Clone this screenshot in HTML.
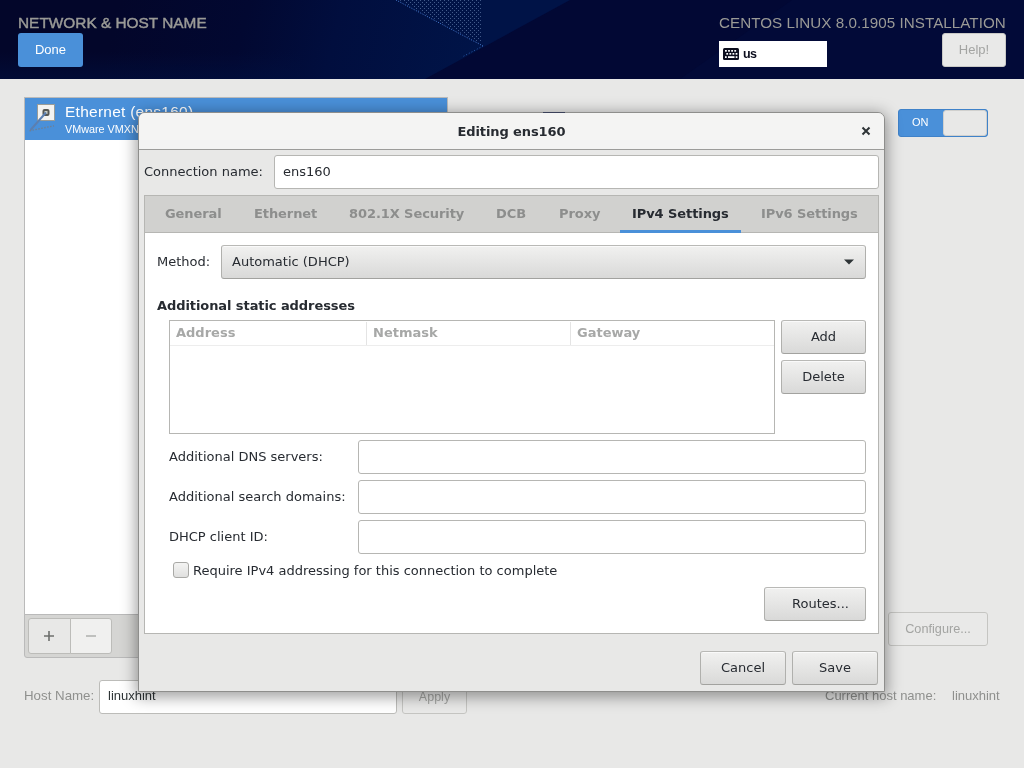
<!DOCTYPE html>
<html lang="en">
<head>
<meta charset="utf-8">
<title>Network &amp; Host Name</title>
<style>
html,body{margin:0;padding:0;}
body{width:1024px;height:768px;overflow:hidden;background:#e8e8e7;position:relative;
  font-family:"Liberation Sans","DejaVu Sans",sans-serif;font-size:13px;color:#2e3436;}
.abs{position:absolute;box-sizing:border-box;}
.t,.btn,.abtn,#done,#help{will-change:transform;}
.t{position:absolute;white-space:nowrap;line-height:1;}
/* header */
#hdr{left:0;top:0;width:1024px;height:79px;background:#020a33;overflow:hidden;}
#hdr svg{position:absolute;left:0;top:0;}
.htitle{font-size:15.5px;color:#9a9a96;letter-spacing:0.1px;}
#done{left:18px;top:33px;width:65px;height:34px;background:#4a90d9;border-radius:3px;color:#fff;
  text-align:center;line-height:33px;font-size:13px;}
#kbd{left:719px;top:41px;width:108px;height:26px;background:#fff;}
#help{left:942px;top:33px;width:64px;height:34px;background:#e9e9e8;border:1px solid #c9c9c6;border-radius:3px;
  color:#a3a4a2;text-align:center;line-height:31px;font-size:13px;}
/* anaconda main */
#list{left:24px;top:97px;width:424px;height:518px;background:#fff;border:1px solid #bababa;}
#row{left:25px;top:98px;width:422px;height:42px;background:#4a90d9;}
#tbar{left:24px;top:614px;width:424px;height:44px;background:#d5d5d3;border:1px solid #bababa;border-radius:0 0 3px 3px;}
.tb{top:618px;height:36px;background:#e8e8e7;border:1px solid #bcbcb9;color:#6d6f6d;text-align:center;}
#sw{left:898px;top:109px;width:90px;height:28px;background:#4a90d9;border:1px solid #3f82c9;border-radius:3px;}
#swk{left:943px;top:110px;width:44px;height:26px;background:#e8e8e7;border:1px solid #d0d0ce;border-radius:3px;}
.abtn{background:#e9e9e8;border:1px solid #c5c5c2;border-radius:3px;color:#a3a4a2;text-align:center;}
#hostent{left:99px;top:680px;width:298px;height:34px;background:#fff;border:1px solid #bcbcb9;border-radius:3px;}
/* dialog */
#dlg{left:138px;top:112px;width:747px;height:580px;background:#e8e8e7;border:1px solid #8e8e8c;border-radius:7px 7px 0 0;
  box-shadow:0 3px 15px 2px rgba(0,0,0,0.38);
  font-family:"DejaVu Sans","Liberation Sans",sans-serif;font-size:13px;color:#272b31;}
#dtitle{left:0;top:0;width:745px;height:37px;background:#f4f4f3;border-bottom:1px solid #9c9c9a;border-radius:6px 6px 0 0;}
.entry{background:#fff;border:1px solid #b6b6b3;border-radius:3px;}
.btn{background:linear-gradient(#f1f1f0,#d9d9d8);border:1px solid #b2b2af;border-color:#b9b9b6 #b0b0ad #a2a29f;border-radius:3px;text-align:center;
  box-shadow:inset 0 1px #fafafa;}
#nb{left:5px;top:82px;width:735px;height:439px;background:#fff;border:1px solid #b6b6b3;}
#nbh{left:0;top:0;width:733px;height:37px;background:#d1d1cf;border-bottom:1px solid #b6b6b3;}
.tab{font-weight:bold;color:#8d8e8d;top:11px;letter-spacing:-0.08px;}
.tab.on{color:#272b31;}
.lbl{color:#272b31;}
</style>
</head>
<body>
<!-- ===== header ===== -->
<div id="hdr" class="abs">
<svg width="1024" height="79" viewBox="0 0 1024 79">
  <defs>
    <linearGradient id="hg" gradientUnits="userSpaceOnUse" x1="120" y1="0" x2="470" y2="90">
      <stop offset="0" stop-color="#03062a"/>
      <stop offset="0.350" stop-color="#020831"/>
      <stop offset="0.600" stop-color="#010e3e"/>
      <stop offset="1" stop-color="#001448"/>
    </linearGradient>
    <linearGradient id="hb" gradientUnits="userSpaceOnUse" x1="0" y1="52" x2="0" y2="79">
      <stop offset="0" stop-color="#001040" stop-opacity="0"/>
      <stop offset="1" stop-color="#001040" stop-opacity="0.550"/>
    </linearGradient>
    <pattern id="dots" width="4" height="4" patternUnits="userSpaceOnUse">
      <rect x="0" y="0" width="1" height="1" fill="#6e88b8" fill-opacity="0.600"/>
      <rect x="2" y="2" width="1" height="1" fill="#6e88b8" fill-opacity="0.600"/>
    </pattern>
  </defs>
  <rect width="1024" height="79" fill="url(#hg)"/>
  <rect width="300" height="79" fill="url(#hb)"/>
  <polygon points="396,0 570,0 483,47" fill="#001347"/>
  <polygon points="399,0 482,0 482,44" fill="url(#dots)"/>
  <polygon points="570,0 1024,0 1024,79 425,79" fill="#020834"/>
  <polygon points="680,79 792,0 1024,0 1024,79" fill="#020a38"/>
  <path d="M396 0 L483 46" stroke="#4a7fd4" stroke-width="1" stroke-dasharray="1 1.500" fill="none"/>
  <path d="M483 46 L462 57" stroke="#2a57a5" stroke-width="1" stroke-dasharray="1 2" fill="none"/>
</svg>
</div>
<div class="t htitle" style="left:18px;top:15px;font-size:15.4px;letter-spacing:0;-webkit-text-stroke:0.45px #9a9a96;">NETWORK &amp; HOST NAME</div>
<div id="done" class="abs">Done</div>
<div class="t htitle" style="right:18px;top:15px;font-size:15.2px;letter-spacing:0.045px;">CENTOS LINUX 8.0.1905 INSTALLATION</div>
<div id="kbd" class="abs"></div>
<svg class="abs" style="left:723px;top:48px" width="16" height="12" viewBox="0 0 16 12">
  <rect x="0" y="0" width="16" height="12" rx="1.500" fill="#0c0e1e"/>
  <g fill="#fff">
    <rect x="2" y="2" width="1.800" height="1.700"/><rect x="5.100" y="2" width="1.800" height="1.700"/><rect x="8.200" y="2" width="1.800" height="1.700"/><rect x="11.300" y="2" width="1.800" height="1.700"/>
    <rect x="3.300" y="5" width="1.800" height="1.700"/><rect x="6.400" y="5" width="1.800" height="1.700"/><rect x="9.500" y="5" width="1.800" height="1.700"/><rect x="12.600" y="5" width="1.800" height="1.700"/>
    <rect x="2" y="8.200" width="1.700" height="1.800"/><rect x="5" y="8.200" width="6.500" height="1.800"/><rect x="12.700" y="8.200" width="1.700" height="1.800"/>
  </g>
</svg>
<div class="t" style="left:743px;top:48px;font-weight:bold;font-size:12.5px;letter-spacing:-0.6px;color:#0c0e1e;">us</div>
<div id="help" class="abs">Help!</div>

<!-- ===== main anaconda page ===== -->
<div id="list" class="abs"></div>
<div id="row" class="abs"></div>
<svg class="abs" style="left:28px;top:103px" width="28" height="30" viewBox="0 0 28 30">
  <rect x="9.500" y="1.500" width="17" height="16" fill="#f3f3f1" stroke="#9a9c97"/>
  <rect x="14.500" y="6" width="7" height="7" rx="2" fill="#555753"/>
  <rect x="16.500" y="8" width="3" height="3" fill="#c9cdc6"/>
  <path d="M18 9.500 L2.500 27" stroke="#5b7fb0" stroke-width="2" fill="none"/>
  <path d="M1.500 27.800 L26 22.800" stroke="#6f7f93" stroke-width="1.300" stroke-dasharray="1.500 1.500" fill="none"/>
</svg>
<div class="t" style="left:65px;top:104px;font-size:15.5px;letter-spacing:0.25px;color:#fff;">Ethernet (ens160)</div>
<div class="t" style="left:65px;top:124px;font-size:10.8px;color:#fff;">VMware VMXNET3 Ethernet Controller</div>
<div id="tbar" class="abs"></div>
<div class="abs tb" style="left:28px;width:43px;border-radius:3px 0 0 3px;"></div>
<svg class="abs" style="left:44px;top:631px" width="10" height="10" viewBox="0 0 10 10"><path d="M5 0 V10 M0 5 H10" stroke="#6d6f6d" stroke-width="1.600" fill="none"/></svg>
<div class="abs tb" style="left:70px;width:42px;border-radius:0 3px 3px 0;background:#f0f0ef;"></div>
<svg class="abs" style="left:86px;top:631px" width="10" height="10" viewBox="0 0 10 10"><path d="M0 5 H10" stroke="#b3b4b2" stroke-width="1.600" fill="none"/></svg>
<div id="sw" class="abs"></div>
<div class="t" style="left:912px;top:117px;font-size:11px;color:#fff;">ON</div>
<div id="swk" class="abs"></div>
<div class="abs abtn" style="left:888px;top:612px;width:100px;height:34px;line-height:32px;font-size:12.7px;">Configure...</div>
<div class="t" style="left:24px;top:689px;font-size:13.3px;color:#8f908e;">Host Name:</div>
<div id="hostent" class="abs"></div>
<div class="t" style="left:108px;top:689px;font-size:13px;color:#2e3436;">linuxhint</div>
<div class="abs abtn" style="left:402px;top:680px;width:65px;height:34px;line-height:32px;font-size:12.5px;">Apply</div>
<div class="t" style="left:825px;top:689px;font-size:13px;color:#8f908e;">Current host name:</div>
<div class="t" style="left:952px;top:689px;font-size:13px;color:#8f908e;">linuxhint</div>

<!-- ===== dialog ===== -->
<div id="dlg" class="abs">
  <div id="dtitle" class="abs"></div>
  <div class="abs" style="left:404px;top:-1px;width:22px;height:1px;background:#3b4159;"></div>
  <div class="t" style="left:0px;width:745px;text-align:center;top:12px;font-weight:bold;letter-spacing:-0.1px;">Editing ens160</div>
  <svg class="abs" style="left:722px;top:13px" width="10" height="10" viewBox="0 0 10 10"><path d="M1.500 1.500 L8.500 8.500 M8.500 1.500 L1.500 8.500" stroke="#2e3436" stroke-width="2" fill="none"/></svg>

  <div class="t lbl" style="left:5px;top:52px;">Connection name:</div>
  <div class="abs entry" style="left:135px;top:42px;width:605px;height:34px;"></div>
  <div class="t" style="left:144px;top:52px;">ens160</div>

  <div id="nb" class="abs">
    <div id="nbh" class="abs"></div>
    <div class="t tab" style="left:20px;">General</div>
    <div class="t tab" style="left:109px;">Ethernet</div>
    <div class="t tab" style="left:204px;">802.1X Security</div>
    <div class="t tab" style="left:351px;">DCB</div>
    <div class="t tab" style="left:414px;">Proxy</div>
    <div class="t tab on" style="left:487px;">IPv4 Settings</div>
    <div class="t tab" style="left:616px;">IPv6 Settings</div>
    <div class="abs" style="left:475px;top:34px;width:121px;height:3px;background:#4a90d9;"></div>

    <div class="t lbl" style="left:12px;top:59px;">Method:</div>
    <div class="abs btn" style="left:76px;top:49px;width:645px;height:34px;"></div>
    <div class="t" style="left:87px;top:59px;">Automatic (DHCP)</div>
    <svg class="abs" style="left:699px;top:63px" width="10" height="6" viewBox="0 0 10 6"><path d="M0 0.500 H10 L5 5.500 Z" fill="#2e3436"/></svg>

    <div class="t" style="left:12px;top:103px;font-weight:bold;letter-spacing:-0.08px;">Additional static addresses</div>
    <div class="abs" style="left:24px;top:124px;width:606px;height:114px;background:#fff;border:1px solid #b6b6b3;"></div>
    <div class="abs" style="left:25px;top:149px;width:604px;height:1px;background:#ededed;"></div>
    <div class="abs" style="left:221px;top:126px;width:1px;height:23px;background:#e4e4e4;"></div>
    <div class="abs" style="left:425px;top:126px;width:1px;height:23px;background:#e4e4e4;"></div>
    <div class="t" style="left:31px;top:130px;font-weight:bold;color:#a7a8a7;">Address</div>
    <div class="t" style="left:228px;top:130px;font-weight:bold;color:#a7a8a7;">Netmask</div>
    <div class="t" style="left:432px;top:130px;font-weight:bold;color:#a7a8a7;">Gateway</div>
    <div class="abs btn" style="left:636px;top:124px;width:85px;height:34px;line-height:31px;">Add</div>
    <div class="abs btn" style="left:636px;top:164px;width:85px;height:34px;line-height:31px;">Delete</div>

    <div class="t lbl" style="left:24px;top:254px;">Additional DNS servers:</div>
    <div class="abs entry" style="left:213px;top:244px;width:508px;height:34px;"></div>
    <div class="t lbl" style="left:24px;top:294px;">Additional search domains:</div>
    <div class="abs entry" style="left:213px;top:284px;width:508px;height:34px;"></div>
    <div class="t lbl" style="left:24px;top:334px;">DHCP client ID:</div>
    <div class="abs entry" style="left:213px;top:324px;width:508px;height:34px;"></div>

    <div class="abs" style="left:28px;top:366px;width:16px;height:16px;border:1px solid #a9a9a6;border-radius:3px;background:linear-gradient(#f4f4f3,#e0e0df);"></div>
    <div class="t lbl" style="left:48px;top:368px;">Require IPv4 addressing for this connection to complete</div>
    <div class="abs btn" style="left:619px;top:391px;width:102px;height:34px;line-height:31px;padding-left:11px;">Routes...</div>
  </div>

  <div class="abs btn" style="left:561px;top:538px;width:86px;height:34px;line-height:31px;">Cancel</div>
  <div class="abs btn" style="left:653px;top:538px;width:86px;height:34px;line-height:31px;">Save</div>
</div>
</body>
</html>
